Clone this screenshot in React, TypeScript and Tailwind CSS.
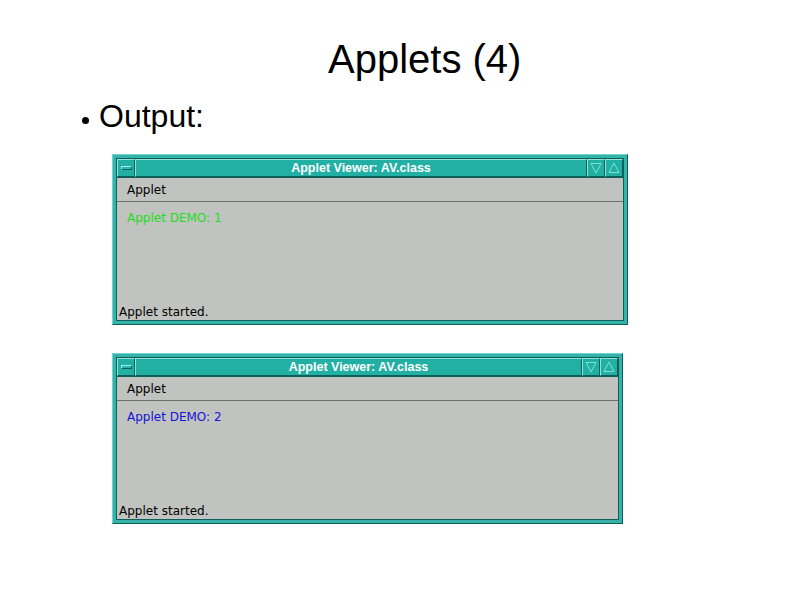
import type { ReactNode } from "react"

/* Slide: "Applets (4)" — two Motif-style Applet Viewer windows. */

const SANS = "font-['Liberation_Sans',Arial,sans-serif]"
const UI = "font-['DejaVu_Sans',Verdana,sans-serif]"

function MenuButton() {
  return (
    <div className="w-[18px] h-full border-t border-l border-[#8fe3dc] border-r border-b border-r-[#0d5f5a] border-b-[#0d5f5a] flex items-center justify-center">
      <div className="w-[11px] h-[4px] border-t border-l border-[#a6efe8] border-r border-b border-r-[#0d5f5a] border-b-[#0d5f5a] bg-[#2ab3a9]" />
    </div>
  )
}

function TriButton({ down }: { down?: boolean }) {
  return (
    <div className="w-[18px] h-full border-t border-l border-[#8fe3dc] border-r border-b border-r-[#0d5f5a] border-b-[#0d5f5a] flex items-center justify-center">
      <svg width="12" height="12" viewBox="0 0 12 12">
        {down ? (
          <path d="M1 1.5 H11 L6 11 Z" fill="none" stroke="#7fe0d8" strokeWidth="1" />
        ) : (
          <path d="M1 10.5 H11 L6 1 Z" fill="none" stroke="#7fe0d8" strokeWidth="1" />
        )}
      </svg>
    </div>
  )
}

function AppletWindow({ width, demo }: { width: string; demo: ReactNode }) {
  return (
    <div
      className={`${width} h-[171px] ml-[112px] border border-[#0d5f5a] border-t-[#6fd6ce] border-l-[#6fd6ce] bg-[#35b3aa] p-[3px] flex`}
    >
      <div className="flex-1 border border-[#0d5f5a] flex flex-col">
        {/* title bar */}
        <div className="h-[19px] flex bg-[#22b0a5] border-b border-[#0d5f5a]">
          <MenuButton />
          <div className="flex-1 h-full border-t border-l border-[#8fe3dc] border-r border-b border-r-[#0d5f5a] border-b-[#0d5f5a] flex items-center justify-center">
            <span className={`${SANS} text-[12.5px] font-bold text-white leading-none`}>
              Applet Viewer: AV.class
            </span>
          </div>
          <TriButton down />
          <TriButton />
        </div>

        {/* client area */}
        <div className={`${UI} flex-1 bg-[#c0c3bf] flex flex-col text-[12px]`}>
          <div className="h-[24px] border-b border-[#6c6e6b] flex items-center pl-[10px] text-black">
            Applet
          </div>
          <div className="flex-1 flex flex-col justify-between pb-[1px]">
            <div className="pl-[10px] pt-[7px]">{demo}</div>
            <div className="pl-[2px] text-black leading-[14px]">Applet started.</div>
          </div>
        </div>
      </div>
    </div>
  )
}

export default function App() {
  return (
    <div className={`${SANS} w-[794px] h-[595px] bg-white overflow-hidden text-black`}>
      <h1 className="pl-[328px] pt-[36px] text-[40px] leading-[46px]">Applets (4)</h1>

      <div className="flex items-center pl-[82px] mt-[16px] h-[36px]">
        <span className="w-[7px] h-[7px] rounded-full bg-black mt-[8px]" />
        <span className="ml-[10px] text-[32px] leading-none">Output:</span>
      </div>

      <div className="mt-[20px] flex flex-col gap-[28px]">
        <AppletWindow
          width="w-[516px]"
          demo={<span className="text-[#22dd22]">Applet DEMO: 1</span>}
        />
        <AppletWindow
          width="w-[511px]"
          demo={<span className="text-[#1414d8]">Applet DEMO: 2</span>}
        />
      </div>
    </div>
  )
}
